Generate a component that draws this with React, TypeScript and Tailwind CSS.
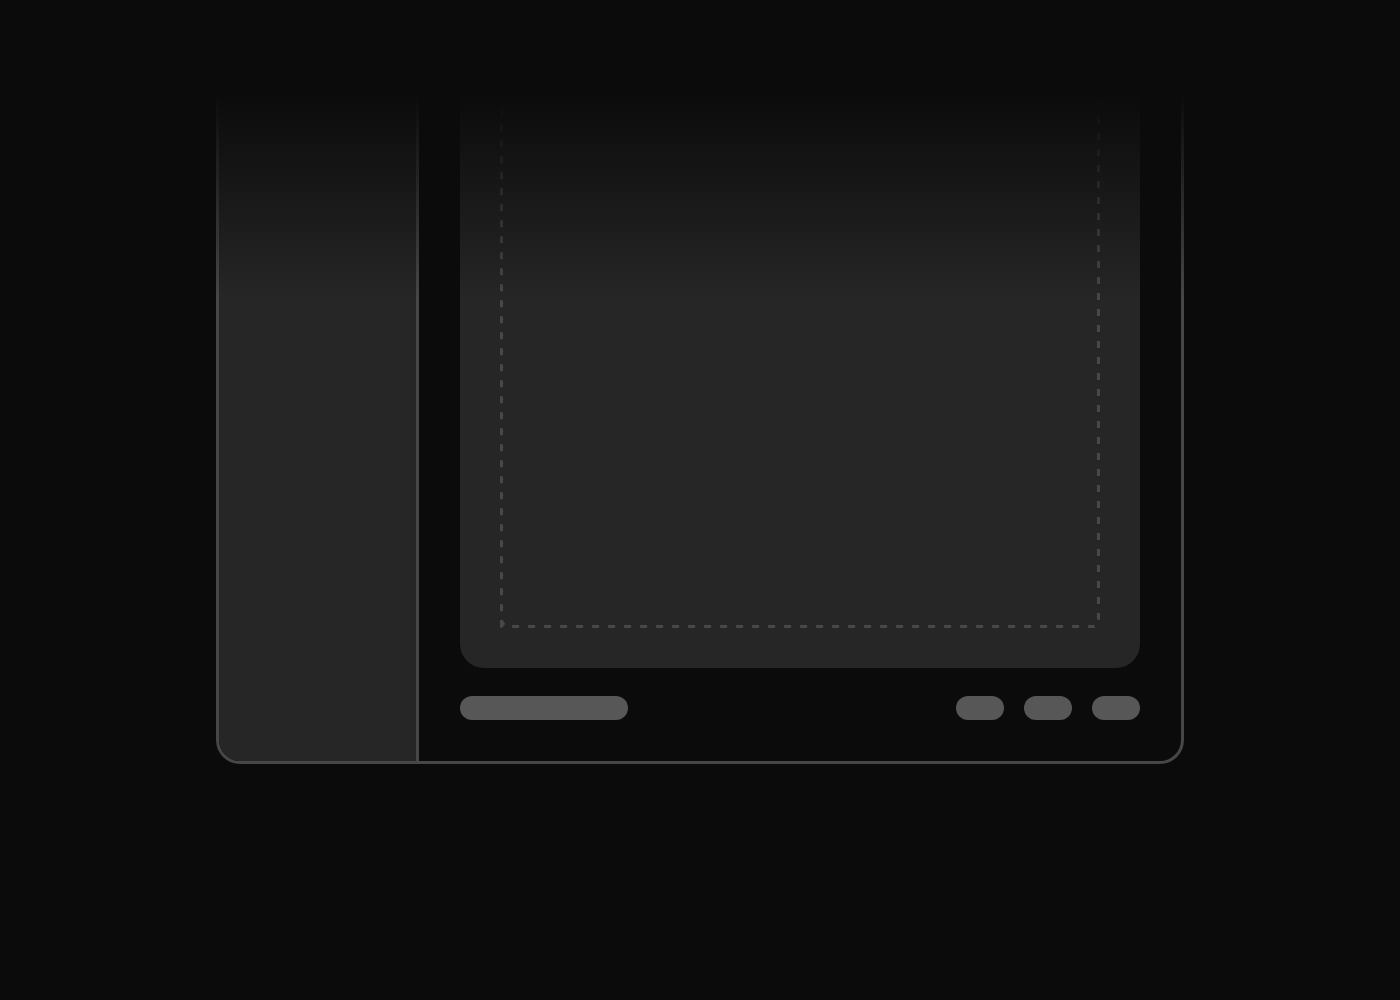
export default function App() {
  return (
    <div className="relative min-h-screen w-full overflow-hidden bg-[#0b0b0b]">
      {/* window mock, top runs off the page */}
      <div className="mx-auto flex h-[764px] w-[968px] rounded-b-3xl border-[3px] border-t-0 border-[#474747] bg-[#0b0b0b]">
        <aside className="w-[200px] shrink-0 rounded-bl-[21px] border-r-[3px] border-[#474747] bg-[#262626]" />

        <main className="flex flex-1 flex-col px-[41px] pb-[41px]">
          <div className="flex-1 rounded-b-3xl bg-[#262626] p-10 pt-16">
            {/* drop zone outline */}
            <div className="relative h-full">
              <svg className="absolute inset-0 h-full w-full" aria-hidden="true">
                <rect
                  x="0"
                  y="0"
                  width="100%"
                  height="100%"
                  rx="9"
                  fill="none"
                  stroke="#484848"
                  strokeWidth="6"
                  strokeDasharray="7 9"
                />
              </svg>
            </div>
          </div>

          <div className="mt-[28px] flex items-center justify-between">
            <div className="h-6 w-[168px] rounded-full bg-[#575757]" />
            <div className="flex gap-5">
              <div className="h-6 w-12 rounded-full bg-[#575757]" />
              <div className="h-6 w-12 rounded-full bg-[#575757]" />
              <div className="h-6 w-12 rounded-full bg-[#575757]" />
            </div>
          </div>
        </main>
      </div>

      {/* fade at the top */}
      <div className="pointer-events-none absolute inset-x-0 top-0 h-[300px] bg-gradient-to-b from-[#0b0b0b] from-[31%] to-transparent" />
    </div>
  );
}
